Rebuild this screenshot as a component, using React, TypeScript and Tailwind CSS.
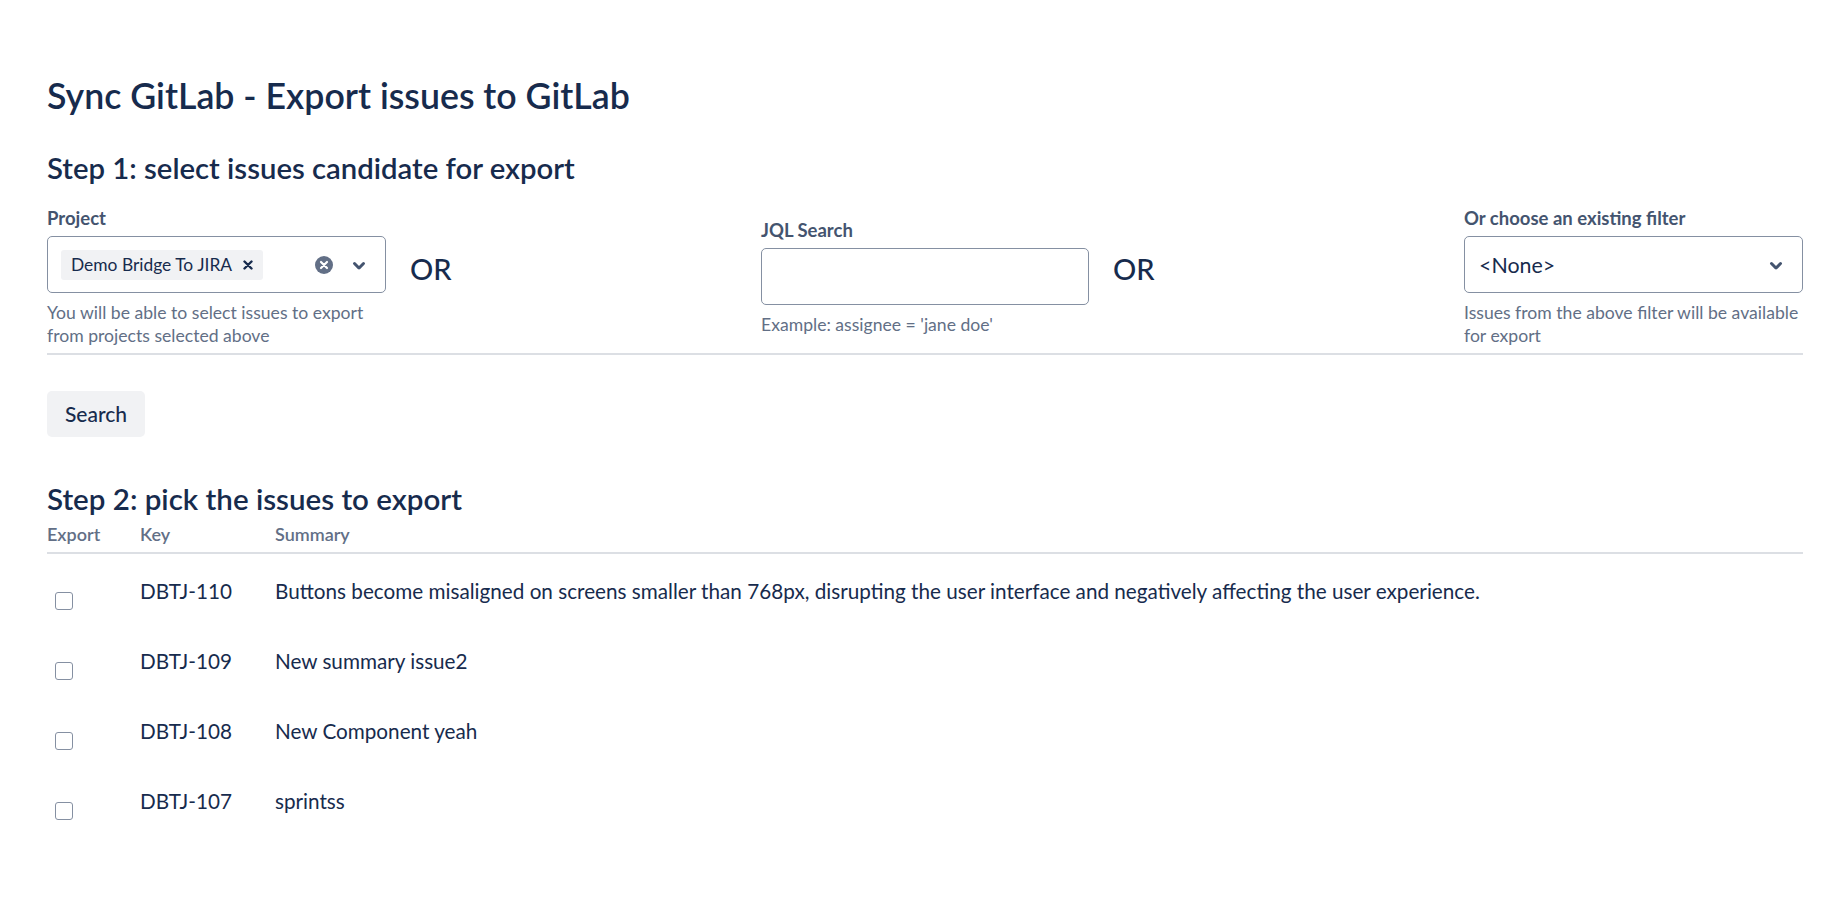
import React from "react";

type Issue = { key: string; summary: string };

const ISSUES: Issue[] = [
  {
    key: "DBTJ-110",
    summary:
      "Buttons become misaligned on screens smaller than 768px, disrupting the user interface and negatively affecting the user experience.",
  },
  { key: "DBTJ-109", summary: "New summary issue2" },
  { key: "DBTJ-108", summary: "New Component yeah" },
  { key: "DBTJ-107", summary: "sprintss" },
];

function ChevronDown() {
  return (
    <svg width="36" height="36" viewBox="0 0 24 24" className="shrink-0">
      <path
        fill="#44546f"
        d="M8.292 10.293a1.009 1.009 0 0 0 0 1.419l2.939 2.965c.218.215.5.322.779.322s.556-.107.769-.322l2.93-2.955a1.01 1.01 0 0 0 0-1.419.987.987 0 0 0-1.406 0l-2.298 2.317-2.307-2.327a.99.99 0 0 0-1.406 0z"
      />
    </svg>
  );
}

function ClearIcon() {
  return (
    <svg width="18" height="18" viewBox="0 0 18 18" className="shrink-0">
      <circle cx="9" cy="9" r="9" fill="#626f86" />
      <path
        d="M6 6l6 6M12 6l-6 6"
        stroke="#ffffff"
        strokeWidth="2.2"
        strokeLinecap="round"
      />
    </svg>
  );
}

function SmallCross() {
  return (
    <svg width="10" height="10" viewBox="0 0 10 10" className="shrink-0">
      <path
        d="M1.5 1.5l7 7M8.5 1.5l-7 7"
        stroke="#172b4d"
        strokeWidth="2.4"
        strokeLinecap="round"
      />
    </svg>
  );
}

function Or() {
  return (
    <div className="pb-[17px] text-[29px] leading-[36px] font-medium text-[#172b4d]">
      OR
    </div>
  );
}

export default function App() {
  return (
    <div className="min-h-screen bg-white pl-[47px] pr-[37px] pt-[76px] font-['Lato',sans-serif] text-[#172b4d]">
      <h1 className="text-[35.7px] leading-[40px] font-semibold">
        Sync GitLab - Export issues to GitLab
      </h1>

      <h2 className="mt-[36px] text-[29.3px] leading-[32px] font-semibold">
        Step 1: select issues candidate for export
      </h2>

      {/* search criteria */}
      <div className="mt-[24px] flex items-center justify-between border-b-2 border-[#dcdfe4] pb-[6px]">
        <div className="flex items-center gap-[24px]">
          <div className="flex flex-col">
            <label className="mb-[8px] text-[18.5px] leading-[20px] font-bold text-[#44546f]">
              Project
            </label>
            <div className="flex h-[57px] w-[339px] items-center rounded-[5px] border border-[#8590a2] pl-[13px] pr-[8px]">
              <div className="flex h-[30px] items-center gap-[11px] rounded-[3px] bg-[#f1f2f4] pl-[10px] pr-[10px]">
                <span className="text-[17.4px] leading-[22px]">Demo Bridge To JIRA</span>
                <SmallCross />
              </div>
              <div className="flex-1" />
              <ClearIcon />
              <div className="ml-[8px]">
                <ChevronDown />
              </div>
            </div>
            <p className="mt-[8px] w-[339px] text-[17.6px] leading-[23px] text-[#626f86]">
              You will be able to select issues to export from projects selected above
            </p>
          </div>
          <Or />
        </div>

        <div className="flex items-center gap-[24px]">
          <div className="flex flex-col">
            <label className="mb-[8px] text-[18.5px] leading-[20px] font-bold text-[#44546f]">
              JQL Search
            </label>
            <input
              type="text"
              className="h-[57px] w-[328px] rounded-[5px] border border-[#8590a2] px-[14px] text-[20px] outline-none"
            />
            <p className="mt-[8px] text-[17.6px] leading-[23px] text-[#626f86]">
              Example: assignee = 'jane doe'
            </p>
          </div>
          <Or />
        </div>

        <div className="flex w-[339px] flex-col">
          <label className="mb-[8px] text-[18.5px] leading-[20px] font-bold text-[#44546f]">
            Or choose an existing filter
          </label>
          <div className="flex h-[57px] items-center justify-between rounded-[5px] border border-[#8590a2] pl-[14px] pr-[8px]">
            <span className="text-[21.4px] leading-[24px]">&lt;None&gt;</span>
            <ChevronDown />
          </div>
          <p className="mt-[8px] text-[17.6px] leading-[23px] text-[#626f86]">
            Issues from the above filter will be available for export
          </p>
        </div>
      </div>

      <button className="mt-[36px] flex h-[46px] items-center rounded-[5px] bg-[#f1f2f4] px-[18px] text-[21px] font-medium text-[#172b4d]">
        Search
      </button>

      <h2 className="mt-[46px] text-[29.5px] leading-[32px] font-semibold">
        Step 2: pick the issues to export
      </h2>

      {/* issues table */}
      <div className="mt-[8px]">
        <div className="flex border-b-2 border-[#dcdfe4] pb-[7px] text-[18px] leading-[22px] font-semibold text-[#626f86]">
          <div className="w-[93px]">Export</div>
          <div className="w-[135px]">Key</div>
          <div>Summary</div>
        </div>
        {ISSUES.map((issue) => (
          <div key={issue.key} className="flex h-[70px] items-start pt-[23px] text-[20.7px] leading-[28px]">
            <div className="w-[93px] pl-[8px]">
              <div className="mt-[15px] h-[18px] w-[18px] rounded-[3px] border-[1.5px] border-[#8590a2] bg-white" />
            </div>
            <div className="w-[135px]">{issue.key}</div>
            <div>{issue.summary}</div>
          </div>
        ))}
      </div>
    </div>
  );
}
